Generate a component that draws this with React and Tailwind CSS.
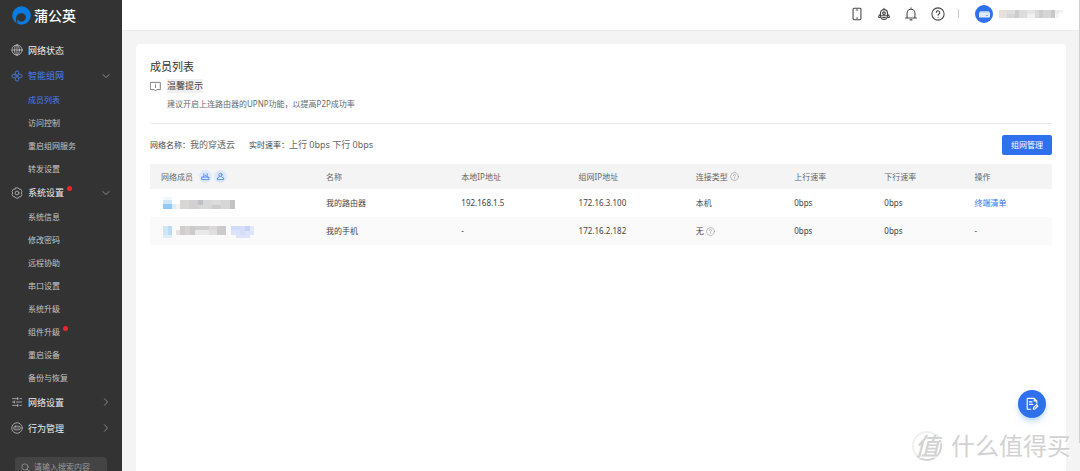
const menu = [
  { id: "status", label: "网络状态", icon: GlobeIcon },
  {
    id: "group",
    label: "智能组网",
    icon: MeshIcon,
    active: true,
    children: [
      { label: "成员列表", active: true },
      { label: "访问控制" },
      { label: "重启组网服务" },
      { label: "转发设置" },
    ],
  },
  {
    id: "system",
    label: "系统设置",
    icon: GearIcon,
    dot: true,
    children: [
      { label: "系统信息" },
      { label: "修改密码" },
      { label: "远程协助" },
      { label: "串口设置" },
      { label: "系统升级" },
      { label: "组件升级", dot: true },
      { label: "重启设备" },
      { label: "备份与恢复" },
    ],
  },
  { id: "network", label: "网络设置", icon: SlidersIcon, collapsed: true },
  { id: "behavior", label: "行为管理", icon: BehaviorIcon, collapsed: true },
];

const members = [
  {
    name: "我的路由器",
    localIp: "192.168.1.5",
    groupIp: "172.16.3.100",
    type: "本机",
    up: "0bps",
    down: "0bps",
    action: "终端清单",
    mask: [
      [2, 0, 9, 3, "#f2f9fd"], [2, 3, 9, 4, "#cfe7f8"], [2, 7, 9, 5, "#93c9ef"],
      [11, 7, 4, 5, "#dcedf8"], [15, 7, 4, 5, "#f3f3f3"], [19, 3, 9, 9, "#d9d6d6"],
      [28, 3, 9, 9, "#d2d0d1"], [37, 3, 5, 5, "#c2c0c6"], [37, 8, 5, 4, "#d6d6d6"],
      [42, 3, 9, 9, "#d6d9d8"], [51, 3, 9, 5, "#dcdcdc"], [51, 8, 9, 4, "#cccccc"],
      [60, 3, 9, 9, "#d6d6d6"], [69, 3, 5, 9, "#c3c3c3"],
    ],
  },
  {
    name: "我的手机",
    localIp: "-",
    groupIp: "172.16.2.182",
    type: "无",
    help: true,
    up: "0bps",
    down: "0bps",
    mask: [
      [2, 1, 5, 9, "#d3e6f3"], [7, 1, 4, 9, "#b9dbf3"], [2, 10, 9, 3, "#dceefa"],
      [15, 5, 5, 5, "#e4e2e2"], [19, 1, 5, 9, "#cfcdcd"], [24, 1, 5, 9, "#d8d4d4"],
      [29, 1, 5, 9, "#cbcaca"], [34, 1, 14, 4, "#cfcfcf"], [34, 5, 14, 5, "#e9e9e9"],
      [48, 1, 8, 4, "#d9d9d9"], [48, 5, 8, 5, "#e0e0e0"], [56, 1, 9, 9, "#cccaca"],
      [70, 1, 9, 4, "#d2dbf7"], [79, 1, 5, 9, "#d7ddf8"], [84, 1, 5, 5, "#c8d1f5"],
      [70, 5, 9, 5, "#dce3fa"], [84, 6, 9, 4, "#dee5fb"], [75, 10, 14, 3, "#dde4fa"],
      [89, 1, 4, 5, "#e4e9fb"],
    ],
  },
];

const accountMask = [
  [0, 1, 4, 8, "#eddede"], [4, 1, 4, 8, "#e4e0e0"], [8, 1, 8, 4, "#dedede"],
  [8, 5, 8, 4, "#d5d5d5"], [16, 1, 4, 8, "#cccccc"], [20, 1, 8, 8, "#dcdcdc"],
  [28, 1, 8, 4, "#e6e6e6"], [28, 5, 8, 4, "#f0f0f0"], [36, 1, 4, 8, "#dadada"],
  [40, 1, 4, 8, "#cdcdcd"], [44, 1, 8, 8, "#d6d6d6"], [52, 1, 4, 8, "#c8c8c8"],
  [56, 1, 4, 4, "#ededed"], [56, 5, 4, 4, "#f5f5f5"], [60, 1, 4, 3, "#f3f3f3"],
];

function Svg({ size, children, className = "", width = 1 }) {
  return (
    <svg
      width={size}
      height={size}
      viewBox="0 0 16 16"
      fill="none"
      stroke="currentColor"
      strokeWidth={width}
      strokeLinecap="round"
      strokeLinejoin="round"
      className={`shrink-0 ${className}`}
      aria-hidden="true"
    >
      {children}
    </svg>
  );
}

function GlobeIcon() {
  return (
    <Svg size={12}>
      <circle cx="8" cy="8" r="6.8" />
      <ellipse cx="8" cy="8" rx="3.2" ry="6.8" />
      <path d="M8 1.2v13.6M1.2 8h13.6" />
    </Svg>
  );
}

function MeshIcon() {
  return (
    <Svg size={12} width={1.2}>
      <path d="M5.8 5.8V3.4a2.2 2.2 0 0 1 4.4 0v2.400h2.400a2.200 2.200 0 0 1 0 4.400h-2.400v2.400a2.200 2.200 0 0 1-4.400 0v-2.400H3.400a2.200 2.200 0 0 1 0-4.400zM8 5.800v4.400M5.800 8h4.400" />
    </Svg>
  );
}

function GearIcon() {
  return (
    <Svg size={12}>
      <path d="M6.3 1.2h3.4l1.1 1.7 2.1.1 1.7 3-.9 2 .9 2-1.7 3-2.1.1-1.1 1.7H6.3l-1.1-1.7-2.1-.1-1.7-3 .9-2-.9-2 1.7-3 2.1-.1z" />
      <circle cx="8" cy="8" r="2.5" />
    </Svg>
  );
}

function SlidersIcon() {
  return (
    <Svg size={12}>
      <path d="M2 3.5h7M12 3.5h2M9 2v3M2 8h2M7 8h7M4.5 6.5v3M2 12.5h7M12 12.5h2M9 11v3" />
    </Svg>
  );
}

function BehaviorIcon() {
  return (
    <Svg size={12}>
      <circle cx="8" cy="8" r="7" />
      <rect x="3.6" y="5.6" width="8.8" height="4.8" rx="2.4" />
      <path d="M6.5 7.5v1M9.500 7.500v1" />
    </Svg>
  );
}

function HelpIcon({ size, width, className }) {
  return (
    <Svg size={size} width={width} className={className}>
      <circle cx="8" cy="8" r="7" />
      <path d="M6 6.3a2 2 0 1 1 3 1.7c-.7.4-1 .7-1 1.5M8 11.6v.1" />
    </Svg>
  );
}

function Chevron({ down }) {
  return (
    <Svg size={8} width={1.6} className="text-[#a0a0a0]">
      <path d={down ? "M1.5 5 8 11l6.500-6" : "M5 1.5 11 8l-6 6.500"} />
    </Svg>
  );
}

function Mask({ blocks, width, height }) {
  return (
    <svg width={width} height={height} shapeRendering="crispEdges" aria-hidden="true">
      {blocks.map(([x, y, w, h, color]) => (
        <rect key={`${x}-${y}`} x={x} y={y} width={w} height={h} fill={color} />
      ))}
    </svg>
  );
}

function Dot() {
  return <span className="ml-[3px] h-[5px] w-[5px] self-start rounded-full bg-[#f5222d]" />;
}

function Sidebar() {
  return (
    <aside className="w-[122px] shrink-0 overflow-hidden bg-[#333] text-[#c4c4c4]">
      <a href="#home" className="flex h-[37px] items-center gap-[3px] pb-[6px] pl-3 text-[14px] font-medium text-white">
        <svg width="19" height="19" viewBox="0 0 19 19" aria-hidden="true">
          <circle cx="9.5" cy="9.5" r="9.3" fill="#0a7be0" />
          <path d="M4.800 17.500C3 13.500 4 8.200 8.500 7.300c3.800-.6 6 2.200 5.300 5-.7 2.700-3.600 4-5.800 3.200-1.400-.5-2.200-1.700-2-3-.9 1.500-.9 3.200-.2 5.300z" fill="#333" />
        </svg>
        蒲公英
      </a>
      <nav>
        {menu.map((item) => {
          const Icon = item.icon;
          return (
            <div key={item.id}>
              <button
                className={`flex w-full items-center pr-3 pl-[11px] text-[9px] leading-[13px] ${item.children ? "h-[25px]" : "h-[26px]"} ${item.active ? "text-[#4a7df0]" : ""}`}
              >
                <Icon />
                <span className={`ml-[5px] flex ${item.active ? "" : "text-[#ececec]"}`}>
                  {item.label}
                  {item.dot && <Dot />}
                </span>
                <span className="ml-auto">
                  {item.children && <Chevron down />}
                  {item.collapsed && <Chevron />}
                </span>
              </button>
              {item.children && (
                <ul>
                  {item.children.map((child) => (
                    <li key={child.label}>
                      <a
                        href="#page"
                        className={`flex h-[23px] items-center pl-7 text-[8px] leading-[12px] ${child.active ? "text-[#4a7df0]" : "text-[#c4c4c4]"}`}
                      >
                        <span className="flex">
                          {child.label}
                          {child.dot && <Dot />}
                        </span>
                      </a>
                    </li>
                  ))}
                </ul>
              )}
            </div>
          );
        })}
      </nav>
      <label className="mx-[15px] mt-4 flex h-5 items-center gap-1 rounded-sm bg-[#444] px-1.5 text-[#999]">
        <Svg size={9} width={1.4}>
          <circle cx="7" cy="7" r="5.5" />
          <path d="m11 11 3.5 3.5" />
        </Svg>
        <input
          type="search"
          aria-label="搜索"
          placeholder="请输入搜索内容"
          className="w-full min-w-0 bg-transparent text-[8px] outline-none placeholder:text-[#999]"
        />
      </label>
    </aside>
  );
}

function TopBar() {
  return (
    <header className="flex h-[31px] shrink-0 items-center justify-end border-b border-[#ececec] bg-white pr-[17px] pb-[3px] text-[#444]">
      <div className="flex items-center gap-[13px]">
        <button aria-label="手机">
          <Svg size={14} width={1.2}>
            <rect x="3.5" y="1.5" width="9" height="13" rx="1" />
            <path d="M7.200 3.500h1.600M7.500 12.500h1" />
          </Svg>
        </button>
        <button aria-label="客服">
          <Svg size={14} width={1.3}>
            <path d="M8 1.500v1M4 10V7a4 4 0 0 1 8 0v3M4 8 2 10.500V12h2.200M12 8l2 2.500V12h-2.200M4 10c.3 2.500 1.700 4.200 4 4.200s3.700-1.700 4-4.200zM6.500 12h3" />
            <circle cx="8" cy="7" r="1.500" />
          </Svg>
        </button>
        <button aria-label="通知">
          <Svg size={14} width={1.2}>
            <path d="M8 1v1.2M3.5 12.500V7a4.500 4.500 0 0 1 9 0v5.500M1.800 12.500h12.400M6.800 14.700h2.400" />
          </Svg>
        </button>
        <button aria-label="帮助">
          <HelpIcon size={14} width={1.2} />
        </button>
      </div>
      <span className="ml-[13px] h-[9px] w-px bg-[#ccc]" />
      <button aria-label="账户" className="ml-4 flex items-center gap-1.5">
        <span className="flex h-[18px] w-[18px] items-center justify-center rounded-full bg-[#2f71ec]">
          <svg width="11" height="8" viewBox="0 0 11 8" aria-hidden="true">
            <path d="M1.500 1h8L11 3H0z" fill="#a9c5f8" />
            <rect y="2.500" width="11" height="5" rx="0.800" fill="#e3ecfd" />
            <path d="M7 5.500h2" stroke="#5d91f1" strokeWidth="0.800" />
          </svg>
        </span>
        <Mask blocks={accountMask} width={64} height={10} />
      </button>
    </header>
  );
}

function MemberTable() {
  return (
    <table className="mt-[9px] w-full table-fixed text-left text-[8px] leading-[12px] text-[#444]">
      <thead className="bg-[#f4f4f4] text-[#666]">
        <tr className="h-[25px] *:pl-[11px] *:font-normal">
          <th className="w-[18.3%]">
            <span className="flex items-center gap-0.5">
              网络成员
              <span className="ml-1 flex h-[13px] w-[13px] items-center justify-center rounded-full bg-[#dfe9fd] text-[#3a76f0]">
                <Svg size={9} width={1.4}>
                  <path d="M2 9h12v4.500H2zM5 9V3M11 9V3M7.500 6h1" />
                </Svg>
              </span>
              <span className="flex h-[13px] w-[13px] items-center justify-center rounded-full bg-[#dfe9fd] text-[#3a76f0]">
                <Svg size={9} width={1.4}>
                  <circle cx="8" cy="5" r="2.8" />
                  <path d="M6 8.500 2.500 10.500v3h11v-3L10 8.500" />
                </Svg>
              </span>
            </span>
          </th>
          <th className="w-[15%]">名称</th>
          <th className="w-[13%]">本地IP地址</th>
          <th className="w-[13%]">组网IP地址</th>
          <th className="w-[10.9%]">
            <span className="flex items-center gap-0.5">
              连接类型
              <HelpIcon size={9} width={1.1} className="text-[#999]" />
            </span>
          </th>
          <th className="w-[10%]">上行速率</th>
          <th className="w-[10%]">下行速率</th>
          <th>操作</th>
        </tr>
      </thead>
      <tbody>
        {members.map((member) => (
          <tr key={member.name} className="h-7 even:bg-[#fafafa] *:pl-[11px]">
            <td>
              <Mask blocks={member.mask} width={96} height={13} />
            </td>
            <td>{member.name}</td>
            <td>{member.localIp}</td>
            <td>{member.groupIp}</td>
            <td>
              <span className="flex items-center gap-0.5">
                {member.type}
                {member.help && <HelpIcon size={9} width={1.1} className="text-[#999]" />}
              </span>
            </td>
            <td>{member.up}</td>
            <td>{member.down}</td>
            <td>
              {member.action ? (
                <a href="#clients" className="text-[#2f71ec]">{member.action}</a>
              ) : (
                "-"
              )}
            </td>
          </tr>
        ))}
      </tbody>
    </table>
  );
}

export default function App() {
  return (
    <div
      lang="zh-CN"
      className="relative flex h-screen overflow-hidden bg-[#f4f4f4] font-['Noto_Sans','Noto_Sans_CJK_SC',sans-serif]"
    >
      <Sidebar />
      <div className="flex min-w-0 flex-1 flex-col">
        <TopBar />
        <main className="mx-[14px] mt-[13px] flex-1 rounded-t bg-white px-[14px] pt-[14px] text-[#444]">
          <h1 className="text-[11px] leading-[17px] text-[#333]">成员列表</h1>
          <section className="mt-1 border-b border-[#e8e8e8] pb-[13px]">
            <h2 className="flex items-center gap-1.5 text-[9px] leading-[14px]">
              <Svg size={11} width={1.2} className="text-[#666]">
                <path d="M1 2h14v10.5H10L8 14.500l-2-2H1zM8 6.500v3M8 4.500v.1" />
              </Svg>
              <span className="bg-[#f0f0f0]">温馨提示</span>
            </h2>
            <p className="mt-1 pl-[17px] text-[8px] leading-[13px] text-[#666]">
              建议开启上连路由器的UPNP功能，以提高P2P成功率
            </p>
          </section>
          <div className="mt-[11px] flex items-center text-[8px]">
            <span>网络名称：</span>
            <span className="text-[9px] text-[#666]">我的穿透云</span>
            <span className="ml-[14px]">实时速率：</span>
            <span className="text-[9px] text-[#666]">上行 0bps 下行 0bps</span>
            <button className="ml-auto h-5 rounded-xs bg-[#2f71ec] px-[9px] text-[8px] text-white">组网管理</button>
          </div>
          <MemberTable />
        </main>
      </div>

      <span className="absolute top-0 right-0 h-[94%] w-px bg-[#d0d0d0]" />

      <button
        aria-label="反馈"
        className="absolute right-[34px] bottom-[53px] flex h-7 w-7 items-center justify-center rounded-full bg-[#2f71ec] text-white shadow-md shadow-blue-200"
      >
        <Svg size={14} width={1.3}>
          <path d="M6.500 14H2.500V1.500h8l3 3V7M10.500 1.500v3h3M5 5.500h3M5 8.500h4M9.500 14l.3-1.800 3.400-3.400 1.500 1.500-3.400 3.400z" />
        </Svg>
      </button>

      <div className="pointer-events-none absolute right-[9px] bottom-2 flex items-center gap-[9px] text-[24px] leading-[34px] text-[#d2d2d2] text-shadow-[1px_1px_0_#fff]">
        <span className="flex h-[30px] w-[30px] items-center justify-center rounded-full border-2 border-t-[#f0f0f0] border-r-[#d2d2d2] border-b-[#d2d2d2] border-l-[#f0f0f0] text-[24px] font-medium italic">
          值
        </span>
        什么值得买
      </div>
    </div>
  );
}
